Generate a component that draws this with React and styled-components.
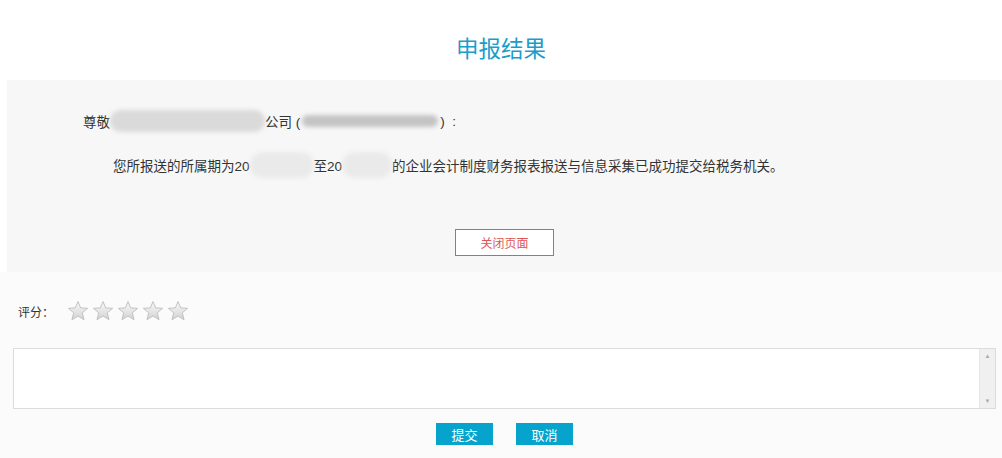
import React from "react";
import styled, { createGlobalStyle } from "styled-components";

const GlobalStyle = createGlobalStyle`
  html, body {
    margin: 0;
    padding: 0;
    background: #ffffff;
    font-family: "Liberation Sans", "Noto Sans CJK SC", sans-serif;
    color: #333;
  }
`;

const Page = styled.div`
  width: 1002px;
  height: 458px;
  overflow: hidden;
  background: #ffffff;
`;

const Title = styled.h1`
  margin: 0;
  height: 80px;
  box-sizing: border-box;
  padding-top: 36px;
  text-align: center;
  font-size: 22.5px;
  font-weight: normal;
  line-height: 28px;
  color: #1a9dc9;
`;

const ResultPanel = styled.div`
  margin-left: 7px;
  height: 192px;
  box-sizing: border-box;
  padding-top: 30px;
  background: #f7f7f7;
`;

const Line = styled.div`
  display: flex;
  align-items: center;
  height: 22px;
  padding-left: ${({ $indent }) => $indent}px;
  margin-bottom: ${({ $gap }) => $gap || 0}px;
  font-size: 13.5px;
  color: #333;
  white-space: nowrap;
`;

const Blur = styled.span`
  display: inline-block;
  width: ${({ $w }) => $w}px;
  height: ${({ $h }) => $h}px;
  border-radius: ${({ $h }) => $h / 2}px;
  background: ${({ $tone }) => $tone};
  filter: blur(2px);
  margin: 0 ${({ $mx }) => $mx || 0}px;
`;

const CloseRow = styled.div`
  display: flex;
  justify-content: center;
  margin-top: 53px;
`;

const CloseButton = styled.button`
  width: 99px;
  height: 27px;
  border: 1px solid #e05a5a;
  background: #ffffff;
  color: #e05555;
  font-size: 12px;
  font-family: "Liberation Sans", "Noto Sans CJK SC", sans-serif;
  cursor: pointer;
`;

const Lower = styled.div`
  height: 186px;
  background: #fbfbfb;
  padding-top: 27px;
  box-sizing: border-box;
`;

const RatingRow = styled.div`
  display: flex;
  align-items: center;
  height: 24px;
  padding-left: 18px;
  font-size: 12px;
  color: #333;
`;

const Stars = styled.div`
  display: flex;
  gap: 3px;
  margin-left: 13px;
`;

const CommentBox = styled.div`
  display: flex;
  margin: 25px 6px 0 13px;
  height: 61px;
  border: 1px solid #dcdcdc;
  background: #ffffff;
  box-sizing: border-box;
`;

const CommentInput = styled.textarea`
  flex: 1;
  border: none;
  outline: none;
  resize: none;
  background: transparent;
  font-family: "Liberation Sans", "Noto Sans CJK SC", sans-serif;
`;

const ScrollBar = styled.div`
  width: 16px;
  display: flex;
  flex-direction: column;
  justify-content: space-between;
  align-items: center;
  background: #f0f0f0;
  border-left: 1px solid #e6e6e6;
  padding: 4px 0;
  box-sizing: border-box;
  font-size: 6px;
  color: #aaa;
  line-height: 6px;
`;

const ActionRow = styled.div`
  display: flex;
  justify-content: center;
  gap: 23px;
  margin-top: 14px;
  padding-left: 7px;
`;

const ActionButton = styled.button`
  width: 57px;
  height: 22px;
  border: none;
  background: #06a4cd;
  color: #ffffff;
  font-size: 13px;
  font-family: "Liberation Sans", "Noto Sans CJK SC", sans-serif;
  padding: 0;
  cursor: pointer;
`;

const Star = () => (
  <svg width="22" height="22" viewBox="0 0 24 23">
    <defs>
      <linearGradient id="starFill" x1="0" y1="0" x2="0" y2="1">
        <stop offset="0" stopColor="#fafafa" />
        <stop offset="1" stopColor="#d2d2d2" />
      </linearGradient>
    </defs>
    <path
      d="M12 1.2 L14.9 8.1 L22.5 8.6 L16.7 13.5 L18.6 21 L12 17 L5.4 21 L7.3 13.5 L1.5 8.6 L9.1 8.1 Z"
      fill="url(#starFill)"
      stroke="#bdbdbd"
      strokeWidth="1"
      strokeLinejoin="round"
    />
  </svg>
);

const App = () => {
  return (
    <Page>
      <GlobalStyle />
      <Title>申报结果</Title>
      <ResultPanel>
        <Line $indent={76} $gap={22}>
          尊敬
          <Blur $w={155} $h={22} $tone="#dadada" />
          公司 (
          <Blur $w={136} $h={12} $tone="#c4c4c4" $mx={2} />
          ) &nbsp;:
        </Line>
        <Line $indent={106}>
          您所报送的所属期为20
          <Blur $w={64} $h={26} $tone="#eaeaea" />
          至20
          <Blur $w={50} $h={26} $tone="#eaeaea" />
          的企业会计制度财务报表报送与信息采集已成功提交给税务机关。
        </Line>
        <CloseRow>
          <CloseButton>关闭页面</CloseButton>
        </CloseRow>
      </ResultPanel>
      <Lower>
        <RatingRow>
          评分：
          <Stars>
            {[0, 1, 2, 3, 4].map((i) => (
              <Star key={i} />
            ))}
          </Stars>
        </RatingRow>
        <CommentBox>
          <CommentInput />
          <ScrollBar>
            <span>▲</span>
            <span>▼</span>
          </ScrollBar>
        </CommentBox>
        <ActionRow>
          <ActionButton>提交</ActionButton>
          <ActionButton>取消</ActionButton>
        </ActionRow>
      </Lower>
    </Page>
  );
};

export default App;
